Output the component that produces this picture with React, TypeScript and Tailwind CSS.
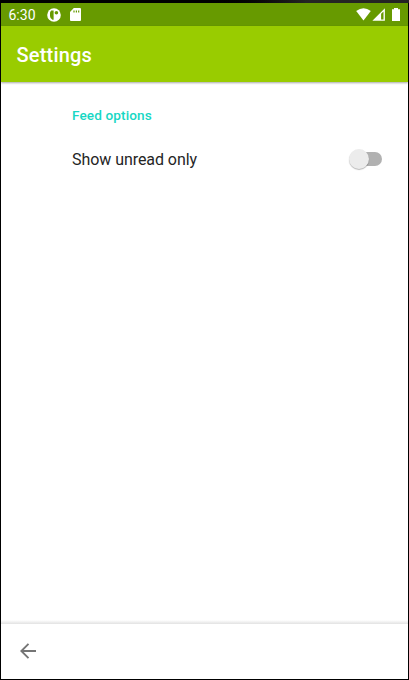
function StatusIcons() {
  return (
    <svg className="h-[23px] w-[48px]" viewBox="0 0 48 23" fill="#fff" aria-hidden="true">
      <path d="M0.2 8Q7.5 2.4 14.8 8L7.5 17.6Z" />
      <path d="M16.4 17.8L28.9 5.2V17.8Z" />
      <path d="M25.1 10.8L27.5 8.5V16.6H25.1Z" fill="#679a00" />
      <path d="M36 6.2H38V5H42V6.2H44V18H36Z" />
    </svg>
  );
}

function AppIcon() {
  return (
    <svg className="h-[14px] w-[14px]" viewBox="0 0 14 14" aria-hidden="true">
      <circle cx="7" cy="7" r="6.8" fill="#fff" />
      <path d="M4.2 2.6H6.6V11.8H5.4Q3 10.4 3 8V4.2Z" fill="#679a00" />
      <circle cx="9.4" cy="4.8" r="1.8" fill="#679a00" />
    </svg>
  );
}

function SdCard() {
  return (
    <svg className="ml-[9px] h-[13px] w-[11px]" viewBox="0 0 11 13" aria-hidden="true">
      <path d="M3.8 0H10Q11 0 11 1V12Q11 13 10 13H1Q0 13 0 12V4Z" fill="#fff" />
      <path d="M3.4 2.4H4.6V4.6H3.4ZM5.8 2.4H7V4.6H5.8ZM8.1 2.4H9.3V4.6H8.1Z" fill="#679a00" />
    </svg>
  );
}

export default function App() {
  return (
    <div className="flex h-[680px] w-[409px] flex-col bg-black font-['Roboto',sans-serif]">
      <div className="h-[3px] shrink-0 bg-linear-to-r from-black from-50% to-[#242424] to-75%" />
      <div className="mr-px mb-px ml-px flex min-h-0 flex-1 flex-col bg-white">
        <div className="flex h-[23px] shrink-0 items-center bg-[#679a00]">
          <span className="ml-[7.5px] w-[38px] pt-[2px] text-[14px] leading-[21px] text-white">6:30</span>
          <AppIcon />
          <SdCard />
          <div className="mr-[4px] ml-auto"><StatusIcons /></div>
        </div>
        <header className="z-10 flex h-[56px] shrink-0 items-center bg-[#99cc00] pt-[2px] pl-[15.5px] shadow-[0_1px_2px_rgba(0,0,0,0.35)]">
          <h1 className="text-[20px] font-medium tracking-[0.2px] text-white">Settings</h1>
        </header>
        <main className="flex-1 bg-white pl-[71px]">
          <h2 className="mt-[23px] text-[13.6px] leading-5 font-medium tracking-[0.1px] text-[#17d7c4]">Feed options</h2>
          <div className="mt-[22px] flex h-6 items-center justify-between pr-[26.5px]">
            <span className="pt-px text-[16px] tracking-[-0.06px] text-[#252525]">Show unread only</span>
            <div className="flex h-[14px] w-[33px] items-center rounded-full bg-linear-to-r from-transparent from-30% to-[#b1b1b1] to-30%">
              <span className="h-5 w-5 shrink-0 rounded-full bg-[#ececec] shadow-[0_1px_1px_rgba(0,0,0,0.28)]" />
            </div>
          </div>
        </main>
        <footer className="shrink-0">
          <div className="h-[4px] bg-linear-to-b from-white to-[#e2e2e2]" />
          <div className="flex h-[55px] items-center bg-white pb-[2px] pl-[19px]">
            <svg className="h-4 w-4" viewBox="0 0 16 16" fill="none" stroke="#757575" strokeWidth="1.9" aria-label="Back">
              <path d="M16 8H1.4M8.5 0.8L1.3 8L8.5 15.2" />
            </svg>
          </div>
        </footer>
      </div>
    </div>
  );
}
